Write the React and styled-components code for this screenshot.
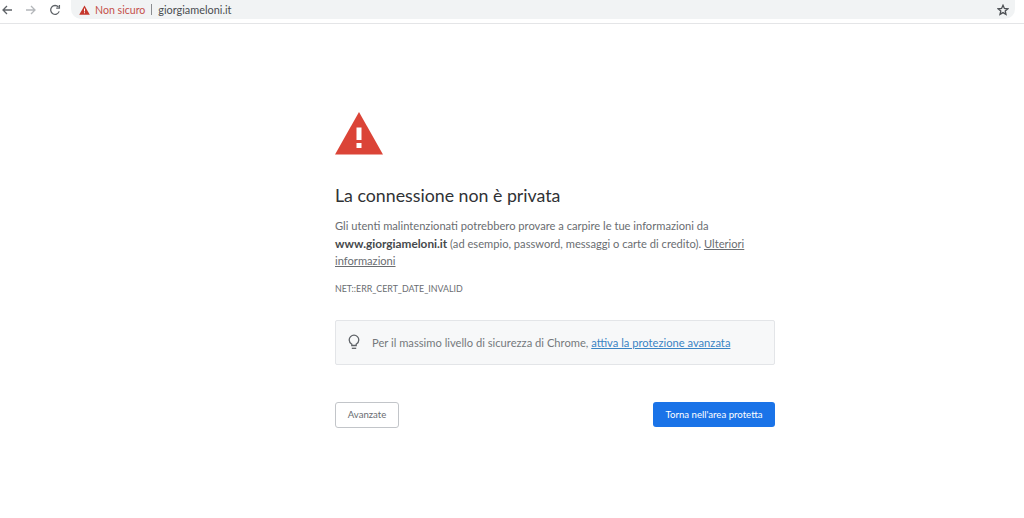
import React from 'react'
import styled, { createGlobalStyle } from 'styled-components'

const Global = createGlobalStyle`
  html, body {
    margin: 0;
    padding: 0;
    background: #fff;
    font-family: Lato, "Open Sans", sans-serif;
    overflow: hidden;
  }
`

const Toolbar = styled.div`
  height: 23px;
  border-bottom: 1px solid #e4e5e7;
  display: flex;
  align-items: flex-start;
  padding: 0 9px 0 0;
`
const NavIcons = styled.div`
  width: 71px;
  height: 19px;
  flex: none;
  display: flex;
  align-items: center;
  gap: 12px;
  padding-left: 1px;
  box-sizing: border-box;
`
const Omnibox = styled.div`
  flex: 1;
  height: 19px;
  background: #f1f3f4;
  border-radius: 0 0 10px 10px;
  display: flex;
  align-items: center;
  padding: 0 6px 0 8px;
`
const NotSecure = styled.span`
  color: #c5504a;
  margin-left: 5px;
  font-size: 10.6px;
`
const Divider = styled.span`
  width: 1px;
  height: 11px;
  background: #8a8d91;
  margin: 0 6px;
`
const Host = styled.span`
  color: #4a4d50;
  font-size: 10.9px;
  flex: 1;
`
const Page = styled.main`
  width: 440px;
  margin-left: 335px;
  padding-top: 88px;
`
const Title = styled.h1`
  margin: 28px 0 0;
  font-size: 17.75px;
  font-weight: 400;
  line-height: 24px;
  color: #303235;
`
const Body = styled.p`
  margin: 10px 0 0;
  font-size: 11.15px;
  line-height: 17.6px;
  color: #6a6d71;
  strong {
    color: #46494c;
    font-size: 11.8px;
    font-weight: 700;
  }
  a {
    color: #6a6d71;
    text-decoration: underline;
  }
`
const ErrorCode = styled.div`
  margin-top: 13px;
  font-size: 8.85px;
  line-height: 12px;
  color: #6a6d71;
`
const Tip = styled.div`
  margin-top: 25px;
  height: 45px;
  box-sizing: border-box;
  background: #f7f8f9;
  border: 1px solid #e3e5e8;
  border-radius: 2px;
  display: flex;
  align-items: center;
  padding-left: 11px;
  gap: 11px;
  font-size: 11.18px;
  color: #75787c;
  a {
    color: #3a84c4;
    text-decoration: underline;
  }
`
const Actions = styled.div`
  margin-top: 37px;
  display: flex;
  justify-content: space-between;
  align-items: flex-start;
`
const GhostButton = styled.button`
  width: 64px;
  height: 26px;
  background: #fff;
  border: 1px solid #c2c5c9;
  border-radius: 3px;
  padding: 0;
  font: 400 9.6px Lato, sans-serif;
  color: #6a6d71;
`
const PrimaryButton = styled.button`
  width: 122px;
  height: 25px;
  background: #1a73e8;
  border: none;
  border-radius: 3px;
  padding: 0;
  font: 400 9.6px Lato, sans-serif;
  color: #fff;
`

const Arrow = ({ color, flip }) => (
  <svg width="12" height="12" viewBox="0 0 12 12" fill="none" stroke={color} strokeWidth="1.3" style={flip ? { transform: 'scaleX(-1)' } : undefined}>
    <path d="M11 6H2M6 2 2 6l4 4" />
  </svg>
)

const Reload = () => (
  <svg width="12" height="12" viewBox="0 0 12 12" fill="none" stroke="#5f6368" strokeWidth="1.3">
    <path d="M10.2 7.4A4.4 4.4 0 1 1 9.4 3" />
    <path d="M10.4 .9v3.2H7.2" />
  </svg>
)

const SmallWarning = () => (
  <svg width="11" height="10" viewBox="0 0 11 10">
    <path d="M5.5 .5 10.8 9.7H.2z" fill="#c5372c" />
    <path d="M5 3.6h1v3H5zM5 7.2h1v1H5z" fill="#fff" />
  </svg>
)

const Star = () => (
  <svg width="12" height="12" viewBox="0 0 12 12" fill="none" stroke="#4d5054" strokeWidth="1.3">
    <path d="M6 1.3 7.4 4.5l3.4.3-2.6 2.2.8 3.4L6 8.6l-3 1.8.8-3.4L1.2 4.8l3.4-.3z" />
  </svg>
)

const BigWarning = () => (
  <svg width="48" height="43" viewBox="0 0 48 43" style={{ display: 'block' }}>
    <path d="M24 0 48 42.5H0z" fill="#db4437" />
    <path d="M21.5 15.5h5V28h-5zM21.5 31h5v5h-5z" fill="#fff" />
  </svg>
)

const Bulb = () => (
  <svg width="14" height="16" viewBox="0 0 14 16" fill="none" stroke="#5f6368" strokeWidth="1.3">
    <path d="M4.8 11.5V10.2C3.2 9.2 2.2 7.7 2.2 6a4.8 4.8 0 0 1 9.6 0c0 1.7-1 3.2-2.6 4.2v1.3z" />
    <path d="M4.8 14.3h4.4" />
  </svg>
)

export default function App() {
  return (
    <>
      <Global />
      <Toolbar>
        <NavIcons>
          <Arrow color="#5f6368" />
          <Arrow color="#b4b7ba" flip />
          <Reload />
        </NavIcons>
        <Omnibox>
          <SmallWarning />
          <NotSecure>Non sicuro</NotSecure>
          <Divider />
          <Host>giorgiameloni.it</Host>
          <Star />
        </Omnibox>
      </Toolbar>
      <Page>
        <BigWarning />
        <Title>La connessione non è privata</Title>
        <Body>
          Gli utenti malintenzionati potrebbero provare a carpire le tue informazioni da{' '}
          <strong>www.giorgiameloni.it</strong> (ad esempio, password, messaggi o carte di credito).{' '}
          <a href="#">Ulteriori</a> <a href="#">informazioni</a>
        </Body>
        <ErrorCode>NET::ERR_CERT_DATE_INVALID</ErrorCode>
        <Tip>
          <Bulb />
          <span>
            Per il massimo livello di sicurezza di Chrome, <a href="#">attiva la protezione avanzata</a>
          </span>
        </Tip>
        <Actions>
          <GhostButton>Avanzate</GhostButton>
          <PrimaryButton>Torna nell'area protetta</PrimaryButton>
        </Actions>
      </Page>
    </>
  )
}
